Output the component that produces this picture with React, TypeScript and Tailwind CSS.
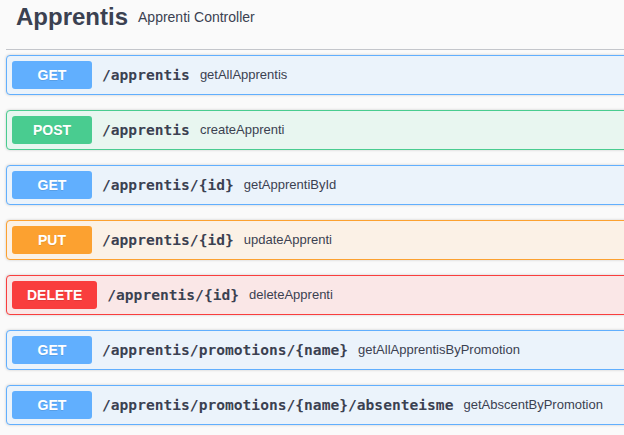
import React from "react";

type Op = {
  method: string;
  path: string;
  desc: string;
  row: string;
  badge: string;
};

const ops: Op[] = [
  { method: "GET", path: "/apprentis", desc: "getAllApprentis", row: "bg-[#ebf3fb] border-[#61affe]", badge: "bg-[#61affe]" },
  { method: "POST", path: "/apprentis", desc: "createApprenti", row: "bg-[#e8f6f0] border-[#49cc90]", badge: "bg-[#49cc90]" },
  { method: "GET", path: "/apprentis/{id}", desc: "getApprentiById", row: "bg-[#ebf3fb] border-[#61affe]", badge: "bg-[#61affe]" },
  { method: "PUT", path: "/apprentis/{id}", desc: "updateApprenti", row: "bg-[#fbf1e6] border-[#fca130]", badge: "bg-[#fca130]" },
  { method: "DELETE", path: "/apprentis/{id}", desc: "deleteApprenti", row: "bg-[#fae7e7] border-[#f93e3e]", badge: "bg-[#f93e3e]" },
  { method: "GET", path: "/apprentis/promotions/{name}", desc: "getAllApprentisByPromotion", row: "bg-[#ebf3fb] border-[#61affe]", badge: "bg-[#61affe]" },
  { method: "GET", path: "/apprentis/promotions/{name}/absenteisme", desc: "getAbscentByPromotion", row: "bg-[#ebf3fb] border-[#61affe]", badge: "bg-[#61affe]" },
];

export default function App() {
  return (
    <div className="w-[624px] h-[435px] overflow-hidden bg-[#fafafa] text-[#3b4151]" style={{ fontFamily: '"Liberation Sans", Arial, sans-serif' }}>
      <div className="ml-[6px] w-[650px]">
        <div className="h-[50px] border-b border-[#c4c6cb] flex items-start pt-[2px] pl-[10px]">
          <div className="flex items-center h-[30px]">
            <span className="text-[24px] font-bold leading-[30px]">Apprentis</span>
            <span className="text-[14px] leading-[16px] px-[10px]">Apprenti Controller</span>
          </div>
        </div>
        <div className="mt-[5px] flex flex-col gap-[15px]">
          {ops.map((op, i) => (
            <div
              key={i}
              className={`h-[40px] border rounded-[4px] shadow-[0_0_3px_rgba(0,0,0,0.19)] flex items-center px-[5px] ${op.row}`}
            >
              <div
                className={`min-w-[80px] px-[15px] py-[6px] rounded-[3px] text-white text-[14px] font-bold leading-[16px] text-center ${op.badge}`}
                style={{ textShadow: "0 1px 0 rgba(0,0,0,0.1)" }}
              >
                {op.method}
              </div>
              <span
                className="px-[10px] text-[14.6px] font-bold whitespace-nowrap"
                style={{ fontFamily: '"DejaVu Sans Mono", monospace' }}
              >
                {op.path}
              </span>
              <span className="text-[13px] whitespace-nowrap">{op.desc}</span>
            </div>
          ))}
        </div>
      </div>
    </div>
  );
}
